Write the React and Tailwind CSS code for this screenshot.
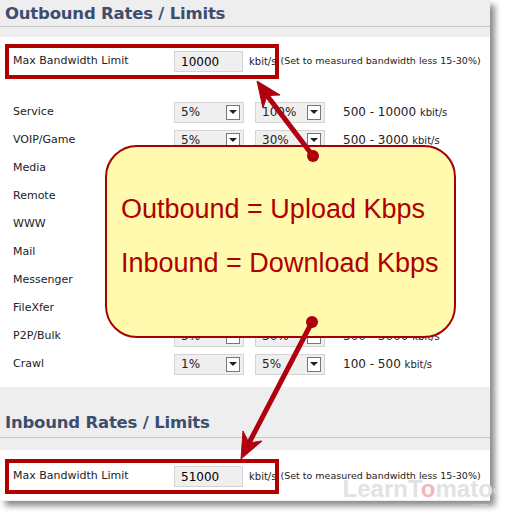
import React from "react";

const rows = [
  { name: "Service", a: "5%", b: "100%", range: "500 - 10000" },
  { name: "VOIP/Game", a: "5%", b: "30%", range: "500 - 3000" },
  { name: "Media", a: "5%", b: "30%", range: "500 - 3000" },
  { name: "Remote", a: "5%", b: "30%", range: "500 - 3000" },
  { name: "WWW", a: "5%", b: "30%", range: "500 - 3000" },
  { name: "Mail", a: "5%", b: "30%", range: "500 - 3000" },
  { name: "Messenger", a: "5%", b: "30%", range: "500 - 3000" },
  { name: "FileXfer", a: "5%", b: "30%", range: "500 - 3000" },
  { name: "P2P/Bulk", a: "5%", b: "30%", range: "500 - 3000" },
  { name: "Crawl", a: "1%", b: "5%", range: "100 - 500" },
];

function Select({ value }) {
  return (
    <div className="flex items-center justify-between w-[70px] h-[21px] bg-[#efefef] border border-[#d4d4d4] pl-[6px] pr-[3px]">
      <span className="text-[12px] text-[#222]">{value}</span>
      <span className="flex items-center justify-center w-[14px] h-[15px] bg-white border border-[#777]">
        <span className="w-0 h-0 border-l-[4px] border-r-[4px] border-t-[4px] border-l-transparent border-r-transparent border-t-[#222]" />
      </span>
    </div>
  );
}

function BandwidthRow({ value }) {
  return (
    <div className="relative flex items-center h-[35px] mx-[5px]">
      <div className="absolute left-0 top-0 w-[274px] h-[35px] border-[4px] border-[#b20000]" />
      <span className="pl-[8px] w-[169px] text-[#222]">Max Bandwidth Limit</span>
      <div className="flex items-center w-[69px] h-[21px] bg-[#efefef] border border-[#d4d4d4] pl-[6px] text-[12px]">{value}</div>
      <span className="ml-[6px] text-[10px] text-[#222]">kbit/s</span>
      <span className="ml-[4px] text-[9.5px] text-[#222]">(Set to measured bandwidth less 15-30%)</span>
    </div>
  );
}

export default function App() {
  return (
    <div className="relative w-[506px] h-[516px] bg-white overflow-hidden" style={{ fontFamily: '"DejaVu Sans", Verdana, sans-serif' }}>
      <div className="w-[490px] h-[501px] bg-[#eeeeee] shadow-[5px_5px_6px_rgba(0,0,0,0.45)] text-[11px]">
        <div className="h-[27px] flex items-center px-[5px] pt-[2px] border-b border-[#c8c8c8]">
          <h2 className="text-[16.5px] leading-[20px] font-bold text-[#3e4d6e] tracking-[-0.2px]">Outbound Rates / Limits</h2>
        </div>
        <div className="mt-[10px] bg-white pt-[7px] pb-[9px]">
          <BandwidthRow value="10000" />
          <div className="mt-[19px]">
            {rows.map((r) => (
              <div key={r.name} className="flex items-center h-[28px]">
                <span className="pl-[13px] w-[174px] text-[#222]">{r.name}</span>
                <Select value={r.a} />
                <div className="ml-[11px]">
                  <Select value={r.b} />
                </div>
                <span className="ml-[18px] text-[12px] text-[#222]">
                  {r.range} <span className="text-[10px]">kbit/s</span>
                </span>
              </div>
            ))}
          </div>
        </div>
        <div className="h-[51px] flex items-end px-[5px] pb-[4px] border-b border-[#c8c8c8]">
          <h2 className="text-[16.5px] leading-[20px] font-bold text-[#3e4d6e] tracking-[-0.2px]">Inbound Rates / Limits</h2>
        </div>
        <div className="mt-[12px] bg-white pt-[9px] pb-[6px]">
          <BandwidthRow value="51000" />
        </div>
      </div>

      <div className="absolute right-[8px] top-[477px] flex flex-col items-end" style={{ fontFamily: '"Liberation Sans", Arial, sans-serif' }}>
        <div className="text-[24px] font-bold leading-none text-[#e2e2e2]">
          LearnT<span className="text-[#f2b8b8]">o</span>mato<sup className="text-[7px]">®</sup>
        </div>
        <div className="text-[8px] leading-none text-[#d6d6d6] mr-[10px] mt-[1px]">.com</div>
      </div>

      <div
        className="absolute left-[105px] top-[145px] w-[351px] h-[193px] rounded-[32px] border-2 border-[#a80000] bg-[#fffaad] flex flex-col pl-[14px] pt-[49px] gap-[27px] text-[#b00000] text-[27px] leading-none"
        style={{ fontFamily: '"Liberation Sans", Arial, sans-serif' }}
      >
        <div>Outbound = Upload Kbps</div>
        <div>Inbound = Download Kbps</div>
      </div>

      <svg className="absolute left-0 top-0 pointer-events-none" width="506" height="516" viewBox="0 0 506 516">
        <g fill="#b00010" stroke="#b00010">
          <line x1="313" y1="156" x2="267" y2="95.5" strokeWidth="5" />
          <polygon points="257,81 280,95 267,95.5 263,108" strokeWidth="1" />
          <circle cx="313" cy="156" r="6" stroke="none" />
          <line x1="312" y1="322" x2="249" y2="443" strokeWidth="5" />
          <polygon points="241,459 262,441 249,443 243,431" strokeWidth="1" />
          <circle cx="312" cy="322" r="6" stroke="none" />
        </g>
      </svg>
    </div>
  );
}
